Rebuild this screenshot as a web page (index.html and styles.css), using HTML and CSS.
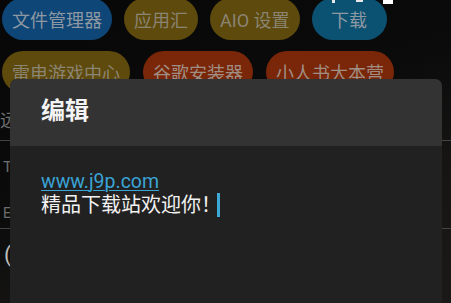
FILE: index.html
```html
<!DOCTYPE html>
<html lang="zh">
<head>
<meta charset="utf-8">
<link rel="stylesheet" href="styles.css">
</head>
<body>
<div class="screen">
  <div class="status">
    <span class="st st-a"></span>
    <span class="st st-b"></span>
    <span class="st st-c"></span>
  </div>
  <div class="chips">
    <div class="chip blue">文件管理器</div>
    <div class="chip olive">应用汇</div>
    <div class="chip olive">AIO 设置</div>
    <div class="chip teal wide">下载</div>
  </div>
  <div class="chips row2">
    <div class="chip olive">雷电游戏中心</div>
    <div class="chip red">谷歌安装器</div>
    <div class="chip red">小人书大本营</div>
  </div>
  <div class="list">
    <div class="item first">远</div>
    <div class="item t">T</div>
    <div class="item e">E</div>
    <div class="item icon">(</div>
  </div>

  <div class="dialog">
    <div class="dialog-head">编辑</div>
    <div class="dialog-body">
      <a class="link">www.j9p.com</a>
      <div class="line">精品下载站欢迎你！<span class="cursor"></span></div>
    </div>
  </div>
</div>
</body>
</html>
```

FILE: styles.css
```css
html, body {
  margin: 0;
  padding: 0;
  background: #000;
}
.screen {
  position: relative;
  width: 451px;
  height: 303px;
  overflow: hidden;
  background: linear-gradient(160deg, #070707 0%, #0b0b0b 45%, #161514 70%, #1a1918 100%);
  font-family: Roboto, "Noto Sans CJK SC", sans-serif;
}
.status {
  position: absolute;
  top: 0;
  left: 0;
  right: 0;
  height: 4px;
}
.st {
  position: absolute;
  top: 0;
  background: #e8e8e8;
}
.st-a { left: 332px; width: 3px; height: 3px; }
.st-b { left: 356px; width: 7px; height: 2px; }
.st-c { left: 383px; width: 10px; height: 4px; background: #fff; }
.chips {
  display: flex;
  gap: 12px;
  padding: 0 0 0 2px;
  margin-top: -2px;
}
.chips.row2 {
  margin-top: 11px;
  gap: 13px;
}
.chip {
  height: 42px;
  border-radius: 21px;
  padding: 0 10px;
  display: flex;
  align-items: center;
  justify-content: center;
  font-size: 18px;
  color: #8e98a2;
  white-space: nowrap;
}
.chip.wide { min-width: 55px; }
.blue { background: #0e4677; }
.teal { background: #0b5272; }
.olive { background: #5e4a0c; color: #8a8472; }
.red { background: #7a2608; color: #a08e84; }
.list {
  margin-top: 0;
}
.item {
  box-sizing: border-box;
  color: #6e6e6e;
  font-size: 18px;
  display: flex;
  align-items: center;
}
.item.first {
  height: 48px;
  border-bottom: 1px solid #444;
  padding-top: 4px;
}
.item.t {
  height: 51px;
  font-size: 15px;
  padding-left: 3px;
}
.item.e {
  height: 37px;
  font-size: 14px;
  padding-left: 3px;
  padding-top: 6px;
  border-bottom: 1px solid #444;
}
.item.icon {
  height: 50px;
  font-size: 22px;
  color: #bdbdbd;
  padding-left: 4px;
}
.dialog {
  position: absolute;
  left: 10px;
  top: 79px;
  width: 432px;
  height: 240px;
  border-radius: 7px 7px 0 0;
  overflow: hidden;
  background: #212121;
}
.dialog-head {
  height: 67px;
  background: #333333;
  box-sizing: border-box;
  padding: 19px 0 0 31px;
  color: #f4f4f4;
  font-size: 24px;
  font-weight: bold;
  line-height: 26px;
}
.dialog-body {
  padding: 24px 0 0 31px;
  font-size: 20px;
  line-height: 23px;
}
.link {
  display: block;
  color: #3aa4d6;
  text-decoration: underline;
  text-underline-offset: 2px;
  text-decoration-thickness: 1px;
  font-size: 19.5px;
}
.line {
  color: #f2f2f2;
  display: flex;
  align-items: center;
}
.cursor {
  display: inline-block;
  width: 3px;
  height: 24px;
  background: #3ba8d8;
  margin-left: -4px;
}
```
